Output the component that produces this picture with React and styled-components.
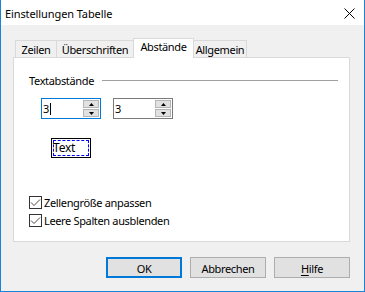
import React from 'react';
import styled, { createGlobalStyle } from 'styled-components';

const Global = createGlobalStyle`
  html, body { margin: 0; padding: 0; background: #ffffff; }
  body {
    font-family: "Noto Sans", "Liberation Sans", sans-serif;
    font-size: 11px;
    letter-spacing: -0.35px;
    color: #000;
  }
  * { box-sizing: border-box; }
`;

const Window = styled.div`
  width: 365px;
  height: 292px;
  border: 1px solid #1883d7;
  border-top: none;
  display: flex;
  flex-direction: column;
  background: #f0f0f0;
`;

const TitleBar = styled.div`
  height: 25px;
  flex: none;
  background: #ffffff;
  display: flex;
  align-items: center;
  justify-content: space-between;
  padding: 2px 9px 0 4px;
`;

const Title = styled.span`
  font-size: 11px;
  line-height: 15px;
  letter-spacing: -0.1px;
`;

const CloseIcon = styled.svg`
  width: 11px;
  height: 11px;
  display: block;
`;

const Body = styled.div`
  flex: 1;
  display: flex;
  flex-direction: column;
  padding: 13px 14px 13px 12px;
`;

const TabStrip = styled.div`
  height: 19px;
  flex: none;
  display: flex;
  align-items: flex-end;
  padding-left: 2px;
  position: relative;
  z-index: 1;
`;

const Tab = styled.div`
  width: ${p => p.$w}px;
  height: ${p => (p.$active ? 20 : 17)}px;
  margin-bottom: ${p => (p.$active ? -1 : 0)}px;
  margin-left: ${p => (p.$first ? 0 : -1)}px;
  border: 1px solid #d9d9d9;
  border-bottom: none;
  background: ${p => (p.$active ? '#ffffff' : '#f0f0f0')};
  position: relative;
  z-index: ${p => (p.$active ? 2 : 1)};
  display: flex;
  justify-content: center;
  padding-top: ${p => (p.$active ? 0 : 1)}px;
  line-height: 15px;
  white-space: nowrap;
`;

const Panel = styled.div`
  flex: 1;
  background: #ffffff;
  border: 1px solid #d9d9d9;
  display: flex;
  flex-direction: column;
  padding: 15px 11px 0 15px;
`;

const GroupHeader = styled.div`
  display: flex;
  align-items: center;
  gap: 8px;
  height: 15px;
  line-height: 15px;
`;

const GroupLine = styled.div`
  flex: 1;
  height: 1px;
  background: #a0a0a0;
`;

const SpinRow = styled.div`
  display: flex;
  gap: 12px;
  margin-top: 10px;
  padding-left: 12px;
`;

const SpinBox = styled.div`
  width: 60px;
  height: 21px;
  border: 1px solid ${p => (p.$focused ? '#0078d7' : '#7a7a7a')};
  background: #ffffff;
  display: flex;
  align-items: center;
  padding: 0 1px 0 1px;
`;

const SpinValue = styled.span`
  line-height: 15px;
  font-size: 11px;
  display: flex;
  align-items: center;
`;

const Caret = styled.span`
  display: inline-block;
  width: 1px;
  height: 12px;
  background: #000;
  margin-left: 1px;
`;

const SpinButtons = styled.div`
  margin-left: auto;
  display: flex;
  flex-direction: column;
  gap: 1px;
`;

const SpinButton = styled.div`
  width: 16px;
  height: 8px;
  background: #e1e1e1;
  border: 1px solid #b4b4b4;
  display: flex;
  align-items: center;
  justify-content: center;
`;

const Arrow = styled.svg`
  width: 5px;
  height: 3px;
  display: block;
`;

const Preview = styled.div`
  margin-top: 19px;
  margin-left: 22px;
  width: 40px;
  height: 20px;
  border: 1px solid #000;
  padding: 1px;
`;

const PreviewInner = styled.div`
  width: 100%;
  height: 100%;
  border: 1px dashed #0000ff;
  line-height: 14px;
  font-size: 12px;
  letter-spacing: -0.2px;
  text-indent: -1px;
`;

const CheckList = styled.div`
  margin-top: 35px;
  display: flex;
  flex-direction: column;
`;

const CheckRow = styled.label`
  height: 18px;
  display: flex;
  align-items: center;
  gap: 2px;
  line-height: 15px;
`;

const CheckBox = styled.span`
  width: 13px;
  height: 13px;
  border: 1px solid #333333;
  background: #ffffff;
  display: flex;
  align-items: center;
  justify-content: center;
  flex: none;
`;

const ButtonRow = styled.div`
  display: flex;
  justify-content: flex-end;
  gap: 8px;
  margin-top: 15px;
`;

const Button = styled.div`
  width: 76px;
  height: 21px;
  background: #e1e1e1;
  border: ${p => (p.$default ? '2px solid #0078d7' : '1px solid #adadad')};
  display: flex;
  align-items: center;
  justify-content: center;
  line-height: 15px;
  padding-top: 1px;
`;

const Accel = styled.span`
  text-decoration: underline;
  text-underline-offset: 2px;
`;

function Check() {
  return (
    <svg width="11" height="11" viewBox="0 0 11 11">
      <polyline points="1,5.5 4,8.5 10,2.5" fill="none" stroke="#4a4a4a" strokeWidth="1" />
    </svg>
  );
}

function Spin({ focused }) {
  return (
    <SpinBox $focused={focused}>
      <SpinValue>
        3{focused && <Caret />}
      </SpinValue>
      <SpinButtons>
        <SpinButton>
          <Arrow viewBox="0 0 5 3"><polygon points="2.5,0 5,3 0,3" fill="#000" /></Arrow>
        </SpinButton>
        <SpinButton>
          <Arrow viewBox="0 0 5 3"><polygon points="0,0 5,0 2.5,3" fill="#000" /></Arrow>
        </SpinButton>
      </SpinButtons>
    </SpinBox>
  );
}

const tabs = [
  { label: 'Zeilen', w: 42 },
  { label: 'Überschriften', w: 78 },
  { label: 'Abstände', w: 61, active: true },
  { label: 'Allgemein', w: 54 },
];

export default function App() {
  return (
    <>
      <Global />
      <Window>
        <TitleBar>
          <Title>Einstellungen Tabelle</Title>
          <CloseIcon viewBox="0 0 11 11">
            <line x1="0.5" y1="0.5" x2="10.5" y2="10.5" stroke="#000" strokeWidth="1" />
            <line x1="10.5" y1="0.5" x2="0.5" y2="10.5" stroke="#000" strokeWidth="1" />
          </CloseIcon>
        </TitleBar>
        <Body>
          <TabStrip>
            {tabs.map((t, i) => (
              <Tab key={t.label} $w={t.w} $active={t.active} $first={i === 0}>
                {t.label}
              </Tab>
            ))}
          </TabStrip>
          <Panel>
            <GroupHeader>
              <span>Textabstände</span>
              <GroupLine />
            </GroupHeader>
            <SpinRow>
              <Spin focused />
              <Spin />
            </SpinRow>
            <Preview>
              <PreviewInner>Text</PreviewInner>
            </Preview>
            <CheckList>
              <CheckRow>
                <CheckBox><Check /></CheckBox>
                Zellengröße anpassen
              </CheckRow>
              <CheckRow>
                <CheckBox><Check /></CheckBox>
                Leere Spalten ausblenden
              </CheckRow>
            </CheckList>
          </Panel>
          <ButtonRow>
            <Button $default>OK</Button>
            <Button>Abbrechen</Button>
            <Button><span><Accel>H</Accel>ilfe</span></Button>
          </ButtonRow>
        </Body>
      </Window>
    </>
  );
}
